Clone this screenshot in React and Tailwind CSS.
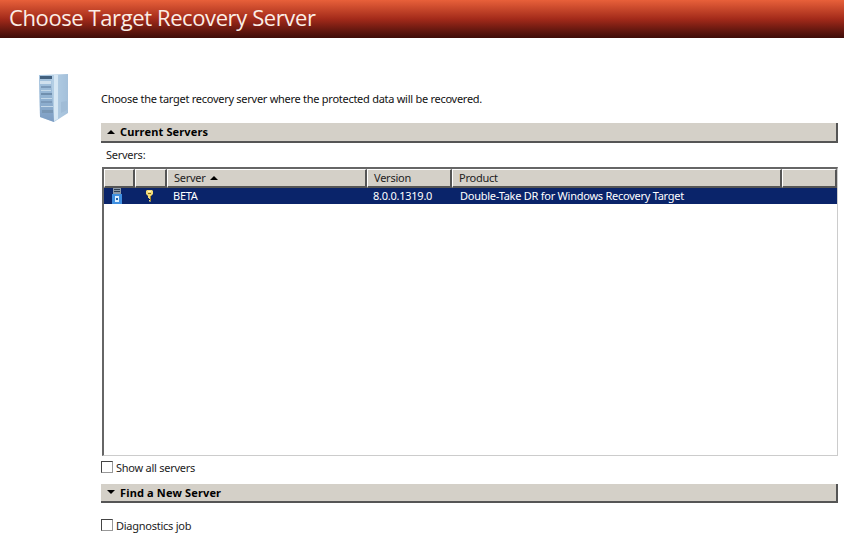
import React from "react";

function ServerIcon() {
  return (
    <svg width="36" height="52" viewBox="0 0 36 52">
      <defs>
        <linearGradient id="front" x1="0" y1="0" x2="0" y2="1">
          <stop offset="0" stopColor="#a9c6e0" />
          <stop offset="0.55" stopColor="#8fb0d0" />
          <stop offset="1" stopColor="#7c9cc2" />
        </linearGradient>
        <linearGradient id="side" x1="0" y1="0" x2="1" y2="0">
          <stop offset="0" stopColor="#cfe2f1" />
          <stop offset="0.4" stopColor="#b5d0e6" />
          <stop offset="1" stopColor="#a4c0da" />
        </linearGradient>
        <filter id="soft">
          <feGaussianBlur stdDeviation="0.7" />
        </filter>
      </defs>
      <g filter="url(#soft)">
        <polygon points="3,3 32,2 32,41 18,50 4,45" fill="url(#side)" />
        <polygon points="3,3 15,3 18,50 4,45" fill="url(#front)" />
        <rect x="4" y="4" width="12" height="3" fill="#42607e" />
        <rect x="4" y="9" width="11" height="3" fill="#d0e0ee" />
        <rect x="5" y="14" width="10" height="2" fill="#7c9aba" />
        <rect x="5" y="18" width="10" height="1" fill="#c4d8e8" />
        <rect x="5" y="21" width="11" height="2" fill="#6f8fae" />
        <rect x="5" y="26" width="11" height="1" fill="#c4d8e8" />
        <rect x="5" y="29" width="11" height="2" fill="#7c9aba" />
        <rect x="5" y="34" width="12" height="1" fill="#c4d8e8" />
        <rect x="6" y="38" width="11" height="3" fill="#7896b4" />
        <polygon points="18,3 22,3 22,47 18,49" fill="#d6e7f4" />
        <polygon points="25,30 31,29 31,38 25,41" fill="#a0bcd6" />
      </g>
    </svg>
  );
}

function RowServerIcon() {
  return (
    <svg width="10" height="16" viewBox="0 0 10 16">
      <rect x="1" y="0" width="8" height="6" fill="#8a98a8" />
      <rect x="2" y="1" width="6" height="1" fill="#2f3f52" />
      <rect x="2" y="3" width="6" height="1" fill="#2f3f52" />
      <rect x="0" y="6" width="10" height="10" fill="#3f8fe0" />
      <rect x="3" y="8" width="4" height="6" fill="#dcefff" />
      <rect x="4" y="10" width="2" height="2" fill="#2060a8" />
    </svg>
  );
}

function KeyIcon() {
  return (
    <svg width="7" height="12" viewBox="0 0 7 12">
      <path d="M1 0h5l1 1v3L5 6v5l-1 1-1-1v-1h1V9H3V8h-1V6L0 4V1z" fill="#f2dc78" />
      <rect x="2" y="1" width="3" height="1" fill="#fff8d0" />
      <rect x="2" y="3" width="3" height="1" fill="#8a6a10" />
      <rect x="4" y="6" width="1" height="5" fill="#a88420" />
    </svg>
  );
}

function SectionBar({ open, className, children }) {
  return (
    <div className={`flex items-center border-r-2 border-b-2 border-[#555] bg-[#d4d0c8] pb-px pl-[6px] ${className}`}>
      <span className={open ? "mr-[5px] h-0 w-0 border-x-[4px] border-b-[4px] border-x-transparent border-b-black" : "mr-[5px] h-0 w-0 border-x-[4px] border-t-[4px] border-x-transparent border-t-black"} />
      <span className="text-[11px] font-bold leading-none tracking-[0.15px] text-black">{children}</span>
    </div>
  );
}

function Check({ label }) {
  return (
    <div className="flex items-center">
      <span className="h-[12px] w-[12px] border border-t-[#444] border-l-[#444] border-r-[#999] border-b-[#999] bg-white" />
      <span className="ml-[3px] text-[11px] leading-none tracking-[-0.25px] text-[#222]">{label}</span>
    </div>
  );
}

function HeadCell({ className, children }) {
  return (
    <div className={`flex h-full shrink-0 items-center border-t border-l border-t-white border-l-white border-r-2 border-b-2 border-r-[#555] border-b-[#555] bg-[#d4d0c8] pl-[6px] text-[11px] tracking-[-0.25px] text-[#222] ${className}`}>
      {children}
    </div>
  );
}

export default function App() {
  return (
    <div className="h-[545px] w-[844px] overflow-hidden bg-white font-['Noto_Sans','DejaVu_Sans',sans-serif]">
      <div className="flex h-[38px] items-center bg-gradient-to-b from-[#e8603a] via-[#a32a1a] to-[#3e0c08] pb-[4px] pl-[9px]">
        <h1 className="font-['Open_Sans',sans-serif] text-[22px] leading-none tracking-[-0.4px] text-[#fbeee6]">Choose Target Recovery Server</h1>
      </div>

      <div className="flex pt-[34px]">
        <div className="w-[101px] shrink-0 pl-[36px]">
          <ServerIcon />
        </div>
        <div className="w-[737px] shrink-0">
          <p className="mt-[21px] h-[30px] text-[11px] leading-[11px] tracking-[-0.27px] text-[#111]">
            Choose the target recovery server where the protected data will be recovered.
          </p>
          <SectionBar open className="h-[20px]">Current Servers</SectionBar>
          <div className="flex h-[24px] items-center pl-[5px] text-[11px] tracking-[-0.25px] text-[#222]">Servers:</div>

          <div className="ml-px h-[289px] border-t-2 border-l-2 border-t-[#666] border-l-[#666] border-r border-b border-r-[#ccc] border-b-[#ccc]">
            <div className="flex h-[19px]">
              <HeadCell className="w-[31px]" />
              <HeadCell className="w-[32px]" />
              <HeadCell className="w-[200px]">
                Server
                <span className="ml-[4px] h-0 w-0 border-x-[4px] border-b-[4px] border-x-transparent border-b-black" />
              </HeadCell>
              <HeadCell className="w-[85px]">Version</HeadCell>
              <HeadCell className="w-[330px]">Product</HeadCell>
              <HeadCell className="grow" />
            </div>
            <div className="flex h-[16px] items-center bg-[#0a246a] text-[11px] tracking-[-0.25px] text-white">
              <div className="flex w-[31px] shrink-0 pl-[8px]">
                <RowServerIcon />
              </div>
              <div className="flex w-[32px] shrink-0 pl-[11px]">
                <KeyIcon />
              </div>
              <div className="w-[200px] shrink-0 pl-[6px]">BETA</div>
              <div className="w-[85px] shrink-0 pl-[6px]">8.0.0.1319.0</div>
              <div className="pl-[8px]">Double-Take DR for Windows Recovery Target</div>
            </div>
          </div>

          <div className="mt-[5px]">
            <Check label="Show all servers" />
          </div>
          <div className="mt-[11px]">
            <SectionBar className="h-[19px]">Find a New Server</SectionBar>
          </div>
          <div className="mt-[16px]">
            <Check label="Diagnostics job" />
          </div>
        </div>
      </div>
    </div>
  );
}
